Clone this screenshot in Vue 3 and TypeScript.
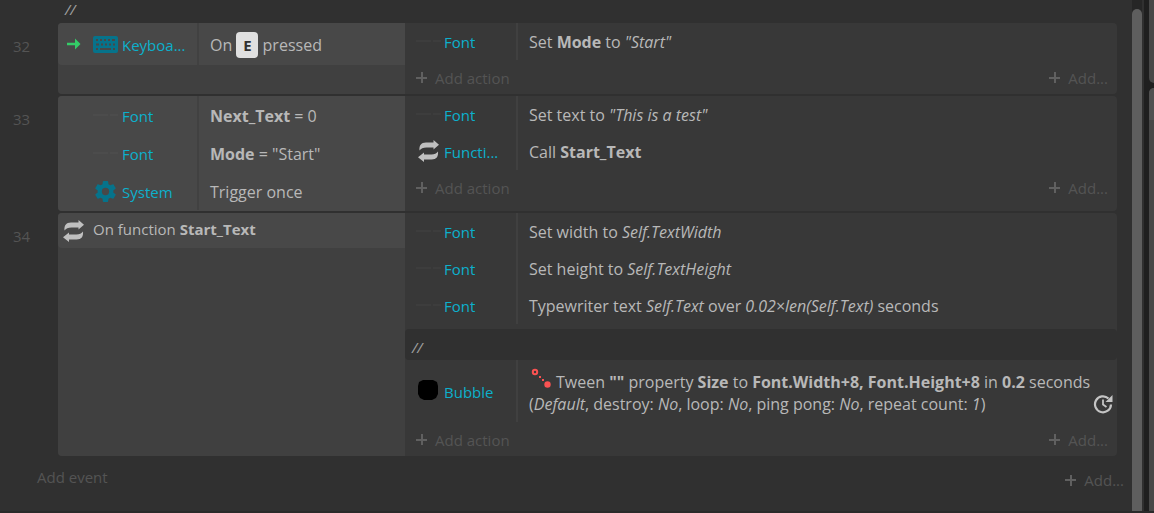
<script setup lang="ts">
interface Segment {
  text: string
  kind?: 'bold' | 'italic' | 'key' | 'tween'
}

type Icon = 'sprite' | 'keyboard' | 'gear' | 'function' | 'bubble'

interface Item {
  icon: Icon
  name?: string
  segments: Segment[]
  trigger?: boolean
  timer?: boolean
  comment?: boolean
}

interface EventBlock {
  id: number
  conditions: Item[]
  actions: Item[]
}

const t = (text: string): Segment => ({ text })
const b = (text: string): Segment => ({ text, kind: 'bold' })
const i = (text: string): Segment => ({ text, kind: 'italic' })

const events: EventBlock[] = [
  {
    id: 32,
    conditions: [
      { icon: 'keyboard', name: 'Keyboa...', trigger: true, segments: [t('On '), { text: 'E', kind: 'key' }, t(' pressed')] },
    ],
    actions: [{ icon: 'sprite', name: 'Font', segments: [t('Set '), b('Mode'), t(' to '), i('"Start"')] }],
  },
  {
    id: 33,
    conditions: [
      { icon: 'sprite', name: 'Font', segments: [b('Next_Text'), t(' = 0')] },
      { icon: 'sprite', name: 'Font', segments: [b('Mode'), t(' = "Start"')] },
      { icon: 'gear', name: 'System', segments: [t('Trigger once')] },
    ],
    actions: [
      { icon: 'sprite', name: 'Font', segments: [t('Set text to '), i('"This is a test"')] },
      { icon: 'function', name: 'Functi...', segments: [t('Call '), b('Start_Text')] },
    ],
  },
  {
    id: 34,
    conditions: [{ icon: 'function', segments: [t('On function '), b('Start_Text')] }],
    actions: [
      { icon: 'sprite', name: 'Font', segments: [t('Set width to '), i('Self.TextWidth')] },
      { icon: 'sprite', name: 'Font', segments: [t('Set height to '), i('Self.TextHeight')] },
      { icon: 'sprite', name: 'Font', segments: [t('Typewriter text '), i('Self.Text'), t(' over '), i('0.02×len(Self.Text)'), t(' seconds')] },
      { icon: 'sprite', comment: true, segments: [t('//')] },
      {
        icon: 'bubble',
        name: 'Bubble',
        timer: true,
        segments: [
          { text: '', kind: 'tween' },
          t('Tween '), b('""'), t(' property '), b('Size'), t(' to '), b('Font.Width+8, Font.Height+8'),
          t(' in '), b('0.2'), t(' seconds '), t('('), i('Default'), t(', destroy: '), i('No'), t(', loop: '), i('No'),
          t(', ping pong: '), i('No'), t(', repeat count: '), i('1'), t(')'),
        ],
      },
    ],
  },
]
</script>

<template>
  <div class="app">
    <main class="sheet">
      <div class="comment top-comment">//</div>

      <section v-for="event in events" :key="event.id" class="event">
        <span class="number">{{ event.id }}</span>
        <div class="block">
          <div class="conditions">
            <div
              v-for="(item, n) in event.conditions"
              :key="n"
              class="condition"
              :class="{ trigger: item.trigger, header: !item.name }"
            >
              <span v-if="item.name" class="marker">
                <svg v-if="item.trigger" width="14" height="12" viewBox="0 0 14 12">
                  <path d="M0 4.7h8V.5L13.5 6 8 11.5V7.3H0z" fill="#34cc67" />
                </svg>
              </span>
              <span class="icon">
                <svg v-if="item.icon === 'keyboard'" width="25" height="17" viewBox="0 0 25 17">
                  <rect width="25" height="17" rx="2" fill="#06738b" />
                  <path
                    d="M3 4h2M7 4h2M11 4h2M15 4h2M19 4h3M3 8.5h3M8 8.5h2M12 8.5h2M16 8.5h2M20 8.5h2M3 13h2M7 13h11M20 13h2"
                    stroke="#484848" stroke-width="2"
                  />
                </svg>
                <svg v-else-if="item.icon === 'gear'" width="21" height="21" viewBox="2 2 20 20">
                  <path
                    fill="#06738b"
                    d="M19.43 12.98c.04-.32.07-.64.07-.98s-.03-.66-.07-.98l2.11-1.65c.19-.15.24-.42.12-.64l-2-3.46c-.12-.22-.39-.3-.61-.22l-2.49 1c-.52-.4-1.08-.73-1.69-.98l-.38-2.65C14.46 2.18 14.25 2 14 2h-4c-.25 0-.46.18-.49.42l-.38 2.65c-.61.25-1.17.59-1.69.98l-2.49-1c-.23-.09-.49 0-.61.22l-2 3.46c-.13.22-.07.49.12.64l2.11 1.65c-.04.32-.07.65-.07.98s.03.66.07.98l-2.11 1.65c-.19.15-.24.42-.12.64l2 3.46c.12.22.39.3.61.22l2.49-1c.52.4 1.08.73 1.69.98l.38 2.65c.03.24.24.42.49.42h4c.25 0 .46-.18.49-.42l.38-2.65c.61-.25 1.17-.59 1.69-.98l2.49 1c.23.09.49 0 .61-.22l2-3.46c.12-.22.07-.49-.12-.64zM12 15.5a3.5 3.5 0 1 1 0-7 3.5 3.5 0 0 1 0 7z"
                  />
                </svg>
                <svg v-else-if="item.icon === 'function'" width="22" height="22" viewBox="0 0 22 22">
                  <path d="M1.500 10.500C1 5.500 3 2.500 8 2.500h7.500V0L21 4.800l-5.500 4.800V7.500H8.500C5 7.500 3 8.500 1.500 10.500z" fill="#c0c0c0" />
                  <path d="M20 11.500c.5 5-1.500 8-6.500 8H6V22L0 17.200l6-4.800v2.100h7.500c3 0 5-1 6.500-3z" fill="#c0c0c0" />
                </svg>
                <svg v-else width="25" height="2" viewBox="0 0 25 2">
                  <path d="M0 1h15M17 1h8" stroke="#505050" />
                </svg>
              </span>
              <span v-if="item.name" class="name">{{ item.name }}</span>
              <span class="text"><template v-for="(s, k) in item.segments" :key="k"><kbd v-if="s.kind === 'key'">{{ s.text }}</kbd><span v-else :class="s.kind">{{ s.text }}</span></template></span>
            </div>
          </div>

          <div class="actions">
            <template v-for="(item, n) in event.actions" :key="n">
              <div v-if="item.comment" class="comment inner-comment">//</div>
              <div v-else class="action" :class="{ tall: item.timer }">
                <span class="icon">
                  <svg v-if="item.icon === 'function'" width="22" height="22" viewBox="0 0 22 22">
                    <path d="M1.500 10.500C1 5.500 3 2.500 8 2.500h7.500V0L21 4.800l-5.500 4.800V7.500H8.500C5 7.500 3 8.500 1.500 10.500z" fill="#c0c0c0" />
                    <path d="M20 11.500c.5 5-1.500 8-6.500 8H6V22L0 17.200l6-4.800v2.100h7.500c3 0 5-1 6.500-3z" fill="#c0c0c0" />
                  </svg>
                  <svg v-else-if="item.icon === 'bubble'" width="22" height="20" viewBox="0 0 22 20">
                    <path d="M5 0h10l4 2 1 4v8l-2 4-4 2H6l-4-2-2-4V6l1-4z" />
                  </svg>
                  <svg v-else width="25" height="2" viewBox="0 0 25 2">
                    <path d="M0 1h15M17 1h8" stroke="#424242" />
                  </svg>
                </span>
                <span class="name">{{ item.name }}</span>
                <span class="text"><template v-for="(s, k) in item.segments" :key="k"><svg v-if="s.kind === 'tween'" class="tween-icon" width="20" height="20" viewBox="0 0 20 20"><circle cx="4" cy="4" r="2.200" fill="none" stroke="#fa5252" stroke-width="2" /><path d="M8 8h2v2H8zM11 11h2v2h-2z" fill="#fa5252" /><circle cx="16.500" cy="16.500" r="3.200" fill="#fa5252" /></svg><span v-else :class="s.kind">{{ s.text }}</span></template></span>
                <svg v-if="item.timer" class="timer" width="20" height="20" viewBox="0 0 20 20">
                  <path d="M15.500 4.500A8 8 0 1 0 18 10.500" fill="none" stroke="#c4c4c4" stroke-width="2.200" />
                  <path d="M19.500 1v7h-7z" fill="#c4c4c4" />
                  <path d="M10 5.500v5l3.500 2.500" fill="none" stroke="#c4c4c4" stroke-width="1.800" />
                </svg>
              </div>
            </template>
            <div class="add-row">
              <button type="button" class="add"><span class="plus"></span>Add action</button>
              <button type="button" class="add"><span class="plus"></span>Add...</button>
            </div>
          </div>
        </div>
      </section>

      <footer class="sheet-footer">
        <button type="button" class="add">Add event</button>
        <button type="button" class="add"><span class="plus"></span>Add...</button>
      </footer>
    </main>
    <div class="scroll-track"><div class="scroll-thumb"></div></div>
    <aside class="side">
      <div class="panel panel-top"></div>
      <div class="panel panel-main"><div class="panel-title"></div></div>
    </aside>
  </div>
</template>

<style>
body {
  background: #303030;
}
</style>

<style scoped>
.app {
  display: flex;
  min-height: 100vh;
  box-sizing: border-box;
  background: #303030;
  border-bottom: 2px solid #2a2a2a;
  color: #b8b8b8;
  font: 15px/22px "Open Sans", "Noto Sans", sans-serif;
}
.sheet {
  flex: 1;
  min-width: 0;
}
.comment {
  color: #a0a0a0;
  font-style: italic;
}
.top-comment {
  height: 23px;
  padding-left: 65px;
  box-sizing: border-box;
  line-height: 18px;
}
.event {
  display: flex;
  margin: 0 15px 2px 0;
}
.number {
  width: 58px;
  padding: 12px 0 0 13px;
  box-sizing: border-box;
  color: #545454;
}
.block {
  flex: 1;
  min-width: 0;
  display: grid;
  grid-template-columns: minmax(0, 347fr) minmax(0, 712fr);
  border-radius: 4px;
  overflow: hidden;
  background: #383838;
}
.conditions {
  background: #404040;
}
.condition,
.action {
  display: flex;
  align-items: center;
}
.condition {
  height: 38px;
  background: #484848;
}
.condition:last-child:not(:first-child) {
  padding-bottom: 1px;
}
.condition.trigger {
  height: 42px;
  border-radius: 0 0 0 4px;
}
.condition.header {
  height: 35px;
  padding-left: 5px;
  box-sizing: border-box;
  border-radius: 0 0 0 4px;
}
.marker {
  display: flex;
  width: 35px;
  padding-left: 9px;
  box-sizing: border-box;
}
.icon {
  display: flex;
  justify-content: center;
  width: 25px;
  flex: none;
}
.header .icon {
  width: 22px;
}
.name {
  align-self: stretch;
  display: flex;
  align-items: center;
  box-sizing: border-box;
  flex: none;
  width: 81px;
  padding: 2px 0 0 4px;
  border-right: 2px solid #414141;
  color: #0cb0cc;
  white-space: nowrap;
}
.text {
  padding: 2px 0 0 11px;
  min-width: 0;
  font-size: 16px;
  white-space: pre-wrap;
}
.header .text {
  padding: 0 0 4px 8px;
  font-size: 15px;
}
.bold {
  font-weight: 700;
}
.italic {
  font-style: italic;
}
kbd {
  display: inline-block;
  width: 22px;
  background: #e0e0e0;
  color: #303030;
  font: 700 15px/26px "Open Sans", "Noto Sans", sans-serif;
  text-align: center;
  border-radius: 4px;
}
.action {
  min-height: 37px;
  padding-left: 11px;
}
.action .icon {
  padding-bottom: 2px;
}
.action .name {
  width: 77px;
  padding: 0 0 0 3px;
  border-color: #404040;
}
.action .text {
  flex: 1;
  padding-top: 0;
}
.action.tall {
  min-height: 62px;
}
.action.tall .name {
  padding-top: 2px;
}
.action.tall .text {
  padding: 6px 0 6px 11px;
}
.tween-icon {
  margin: 0 5px 0 2px;
}
.timer {
  flex: none;
  align-self: flex-end;
  margin: 0 4px 8px 0;
}
.inner-comment {
  height: 31px;
  margin-top: 5px;
  padding-left: 7px;
  border-radius: 4px;
  line-height: 36px;
  background: #303030;
}
.add-row {
  display: flex;
  align-items: center;
  justify-content: space-between;
  height: 34px;
  padding: 1px 9px 0 11px;
  box-sizing: border-box;
}
.add {
  display: flex;
  align-items: center;
  gap: 8px;
  padding: 0;
  border: 0;
  background: none;
  color: #545454;
  font: inherit;
}
.plus {
  width: 11px;
  height: 11px;
  background:
    linear-gradient(#606060, #606060) center / 11px 2px no-repeat,
    linear-gradient(#606060, #606060) center / 2px 11px no-repeat;
}
.sheet-footer {
  display: flex;
  justify-content: space-between;
  align-items: flex-end;
  padding: 8px 8px 0 37px;
}
.sheet-footer .add:first-child {
  padding-bottom: 3px;
}
.scroll-track {
  display: flex;
  flex-direction: column;
  width: 10px;
  margin-right: 2px;
  padding-top: 9px;
  background: #262626;
}
.scroll-thumb {
  flex: 1;
  border-radius: 5px 5px 0 0;
  background: #5e5e5e;
}
.side {
  display: flex;
  flex-direction: column;
  gap: 5px;
  width: 5px;
  padding-left: 5px;
  background: #1f1f1f;
}
.panel {
  background: #484848;
}
.panel-top {
  height: 83px;
  border-radius: 0 0 0 5px;
}
.panel-main {
  flex: 1;
  border-radius: 5px 0 0;
  overflow: hidden;
}
.panel-title {
  height: 32px;
  background: #505050;
}
</style>
